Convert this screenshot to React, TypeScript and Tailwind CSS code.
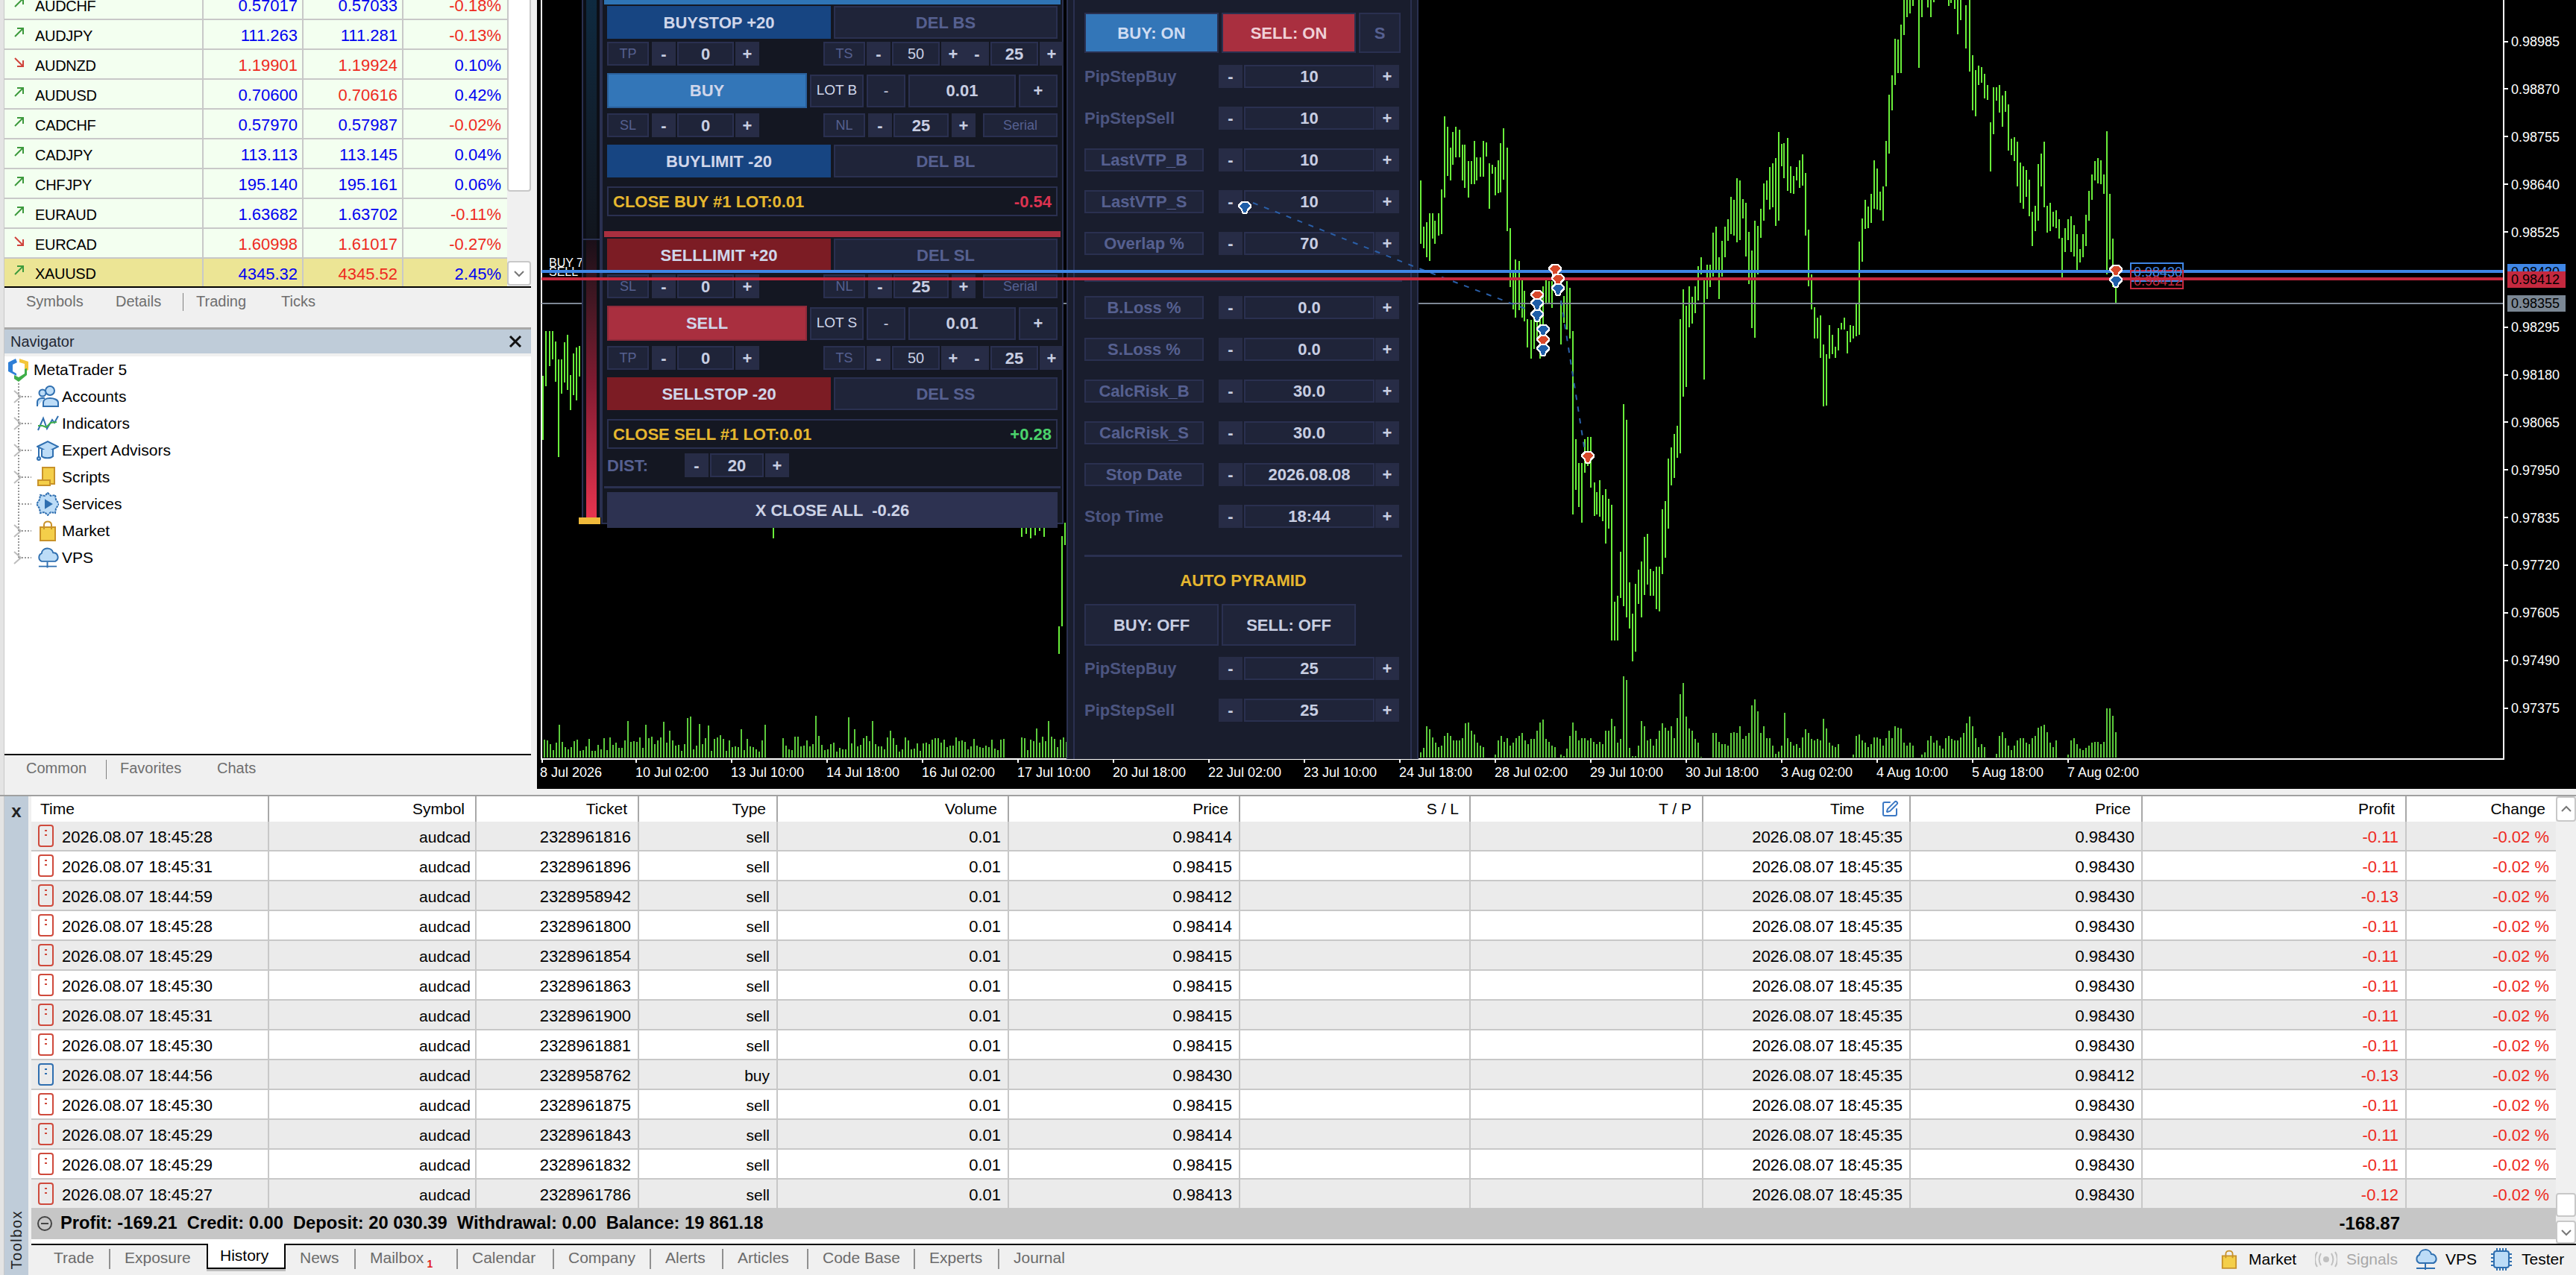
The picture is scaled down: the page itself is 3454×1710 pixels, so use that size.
import React from "react";
import { SquarePen } from "lucide-react";

type Bar = [number, number, number];
const z11: Bar[] = [[10,372,503],[18,467,512],[26,458,530],[35,440,538],[43,440,492],[50,455,503],[59,440,485],[68,390,483],[76,240,408],[84,262,362],[92,305,372],[100,272,340],[108,262,325],[117,268,325],[125,298,372],[133,298,388],[142,332,408],[150,332,380],[158,290,380],[166,325,372],[175,325,365],[183,290,365],[191,293,323],[200,336,430],[208,340,358],[216,345,402],[225,330,398],[232,295,397],[240,265,370],[250,304,476],[258,470,592],[266,560,638],[272,535,655],[282,538,640],[290,578,655],[298,600,662],[306,658,716],[316,660,740],[324,650,720],[332,640,700],[340,610,740],[349,590,680],[357,575,625],[365,580,625],[373,580,635],[381,560,590],[390,575,610],[398,620,710],[406,610,665],[415,580,680],[423,593,698],[431,683,1060],[439,905,1010],[447,955,1045],[456,955,1078],[464,905,975],[472,900,960],[480,900,1005],[490,995,1063],[497,1015,1060],[505,990,1065],[513,1020,1075],[522,1008,1120],[530,1028,1090],[538,1040,1320],[547,1240,1320],[555,1228,1320],[563,1138,1232],[571,833,1250],[579,865,1272],[588,1200,1296],[596,1265,1364],[604,1203,1343],[612,1175,1245],[621,1157,1272],[629,1107,1226],[637,1100,1205],[646,1172,1228],[654,1178,1228],[662,1168,1255],[670,1168,1260],[679,1050,1183],[687,1033,1150],[695,945,1090],[703,922,1000],[712,895,985],[720,877,943],[728,658,935],[736,597,818],[745,630,798],[753,590,675],[761,612,667],[770,590,645],[778,548,620],[786,530,565],[794,575,783],[803,545,617],[811,545,592],[819,480,570],[827,467,560],[836,530,617],[844,497,570],[852,467,530],[860,452,497],[868,405,482],[877,412,485],[885,367,500],[893,372,495],[901,410,450],[910,418,528],[918,478,585],[926,517,676],[935,455,697],[943,465,565],[951,430,490],[959,378,455],[968,372,412],[976,345,432],[984,337,428],[992,326,465],[1000,272,455],[1008,297,343],[1016,295,368],[1025,284,393],[1033,342,398],[1041,363,400],[1050,345,372],[1058,330,388],[1066,318,383],[1075,357,485],[1083,473,590],[1091,565,638],[1100,634,698],[1108,655,698],[1116,650,737],[1124,710,838],[1133,730,836],[1141,670,740],[1149,690,730],[1157,715,738],[1165,677,722],[1174,665,680],[1182,655,680],[1190,683,728],[1199,670,705],[1207,672,698],[1215,625,693],[1223,498,690],[1232,450,540],[1240,412,472],[1248,425,470],[1256,400,460],[1264,330,430],[1273,348,432],[1281,395,433],[1289,385,455],[1298,290,385],[1306,195,316],[1314,155,228],[1322,80,175],[1330,82,150],[1338,50,150],[1347,0,73],[1355,0,36],[1363,0,28],[1371,0,12],[1388,0,140],[1396,0,36],[1413,0,15],[1421,0,36],[1429,0,5],[1470,0,12],[1478,0,6],[1487,0,18],[1495,0,70],[1503,0,42],[1519,10,100],[1529,0,147]];
const z12: Bar[] = [[11,113,228],[19,145,240],[28,135,175],[37,138,170],[46,152,203],[54,175,206],[63,252,353],[72,180,276],[80,180,208],[89,175,232],[98,197,261],[107,188,230],[115,215,310],[124,286,320],[133,283,332],[141,292,384],[150,335,418],[159,342,430],[168,350,405],[176,370,446],[185,437,507],[194,424,477],[202,338,455],[211,317,385],[220,292,427],[228,424,480],[237,418,476],[246,437,467],[254,434,470],[263,452,492],[272,490,572],[281,470,520],[290,452,495],[298,446,520],[307,464,528],[316,483,556],[325,513,541],[333,483,531],[342,443,507],[351,394,455],[359,360,412],[368,332,372],[377,326,378],[386,330,380],[394,360,400],[403,271,565],[412,400,535],[420,492,592],[429,590,624]];
const z3: Bar[] = [[18,1098,1285],[27,967,1128],[36,967,1070],[45,967,1050],[54,997,1115],[63,1050,1336],[72,1050,1150],[80,1000,1118],[89,977,1140],[98,1095,1197],[107,1032,1155],[115,1015,1170],[124,1010,1100],[140,937,1040],[185,955,1018]];
const extra: Bar[] = [[1037,707,722],[1370,707,720],[1376,707,716],[1382,707,722],[1388,707,718],[1394,707,712],[1400,707,720],[1420,840,877],[1424,719,840],[1428,701,731]];
const pricePath = [
  ...z11.map(([x, t, b]) => `M${Math.round(1900 + x / 2.063)} ${Math.round(t / 1.537)}V${Math.round(b / 1.537)}`),
  ...z12.map(([x, t, b]) => `M${Math.round(2640 + x / 2.178)} ${Math.round(t / 1.537)}V${Math.round(b / 1.537)}`),
  ...z3.map(([x, t, b]) => `M${Math.round(720 + x / 2.178)} ${Math.round(t / 2.178)}V${Math.round(b / 2.178)}`),
  ...extra.map(([x, t, b]) => `M${x} ${t}V${b}`),
].join("");

const v11 = [10,20,65,58,42,30,22,25,45,50,45,35,35,35,40,70,73,55,48,30,25,22,0,0,0,6,35,45,32,40,25,30,40,45,50,35,28,38,38,55,72,78,38,32,25,22,0,6,3,18,45,73,55,35,40,40,35,40,32,28,32,28,55,55,80,65,30,38,168,160,20,3,3,25,75,65,35,38,25,38,55,70,62,55,65,40,82,130,153,85,60,55,38,30,2,0,0,0,50,50,32,28,28,25,50,52,50,65,38,45,50,108,120,95,50,65,40,40,25,8,12,25,92,40,32,25,28,20,42,58,50,38,35,38,35,80,60,30,25,22,28,0,0,0,0,6,45,48,35,30,22,28,42,42,38,25,40,55,40,65,62,60,30,25,30,25,0,0,6,10,35,45,30,35,25,18,40,45,38,35,35,42,50,70,85];
const v12 = [85,65,40,22,28,22,0,0,0,8,45,52,40,25,15,25,36,40,40,30,28,40,45,62,65,68,52,30,22,35,0,0,0,6,35,40,28,18,15,20,25,30,32,32,28,32,102,102,86,52];
let seed = 77;
const rnd = () => ((seed = (seed * 1103515245 + 12345) & 0x7fffffff) / 0x7fffffff);
const volLeft: string[] = [];
for (let x = 730; x < 1436; x += 4) {
  const week = (x - 730) % 320 > 296;
  if (week) continue;
  const r = rnd();
  const h = Math.round(8 + rnd() * 22 + (r > 0.9 ? 26 : 0));
  volLeft.push(`M${x} 1016V${1016 - h}`);
}
const volPath = [
  ...volLeft,
  ...v11.map((h, i) => (h ? `M${1905 + i * 4} 1016V${Math.round(1016 - h / 1.537)}` : "")),
  ...v12.map((h, i) => (h ? `M${2641 + i * 4} 1016V${Math.round(1016 - h / 1.537)}` : "")),
].join("");

const priceLabels: [string, number][] = [["0.98985",55.5],["0.98870",119.3],["0.98755",183.2],["0.98640",247],["0.98525",311],["0.98295",438.7],["0.98180",502.5],["0.98065",566.4],["0.97950",630.2],["0.97835",694],["0.97720",757.9],["0.97605",821.8],["0.97490",885.6],["0.97375",949.5]];
const timeLabels = ["10 Jul 02:00","13 Jul 10:00","14 Jul 18:00","16 Jul 02:00","17 Jul 10:00","20 Jul 18:00","22 Jul 02:00","23 Jul 10:00","24 Jul 18:00","28 Jul 02:00","29 Jul 10:00","30 Jul 18:00","3 Aug 02:00","4 Aug 10:00","5 Aug 18:00","7 Aug 02:00"];

function Marker({ x, y, c }: { x: number; y: number; c: string }) {
  return (
    <g transform={`translate(${x} ${y})`} shapeRendering="crispEdges">
      <polygon points="-9,-3 -5,-8 5,-8 9,-3 9,0 5,4 3,9 -3,9 -5,4 -9,0" fill="#fff" />
      <polygon points="-7,-2 -3,-6 3,-6 7,-2 3,3 2,7 -2,7 -3,3" fill={c} />
    </g>
  );
}

function Chart() {
  return (
    <svg className="absolute inset-0" width={2734} height={1058} viewBox="720 0 2734 1058">
      <g shapeRendering="crispEdges">
        <path d={volPath} stroke="#5ccb3c" strokeWidth={2} fill="none" />
        <path d={pricePath} stroke="#69ee3a" strokeWidth={2} fill="none" />
        <rect x={725} y={0} width={2} height={1018} fill="#fff" />
        <rect x={3356} y={0} width={2} height={1018} fill="#fff" />
        <rect x={725} y={1017} width={2633} height={2} fill="#fff" />
        <rect x={726} y={406} width={2630} height={2} fill="#7d8794" />
        {priceLabels.map(([l, y]) => <rect key={l} x={3358} y={y - 1} width={5} height={2} fill="#fff" />)}
        {[726, ...timeLabels.map((_, i) => 852 + i * 128)].map((x) => <rect key={x} x={x} y={1018} width={2} height={5} fill="#fff" />)}
      </g>
      <g fill="#fff" fontSize={18}>
        {priceLabels.map(([l, y]) => <text key={l} x={3367} y={y + 6.5}>{l}</text>)}
        <text x={724} y={1042}>8 Jul 2026</text>
        {timeLabels.map((t, i) => <text key={t} x={852 + i * 128} y={1042}>{t}</text>)}
        <text x={736} y={358} fontSize={16}>BUY 7</text>
        <text x={736} y={370} fontSize={16}>SELL</text>
      </g>
      <rect x={3362} y={354} width={78} height={22} fill="#3f86e6" shapeRendering="crispEdges" />
      <text x={3367} y={371} fontSize={18} fill="#000">0.98430</text>
      <rect x={3362} y={364} width={78} height={22} fill="#c5293f" shapeRendering="crispEdges" />
      <rect x={3362} y={396} width={78} height={22} fill="#7b8794" shapeRendering="crispEdges" />
      <g fontSize={18} fill="#000">
        <text x={3367} y={413}>0.98355</text>
        <text x={3367} y={381}>0.98412</text>
      </g>
    </svg>
  );
}

function Overlay() {
  return (
    <svg className="absolute inset-0 pointer-events-none" width={2734} height={1058} viewBox="720 0 2734 1058">
      <polyline points="1680,272 1900,359 2045,414" fill="none" stroke="#2a5fa8" strokeWidth={2} strokeDasharray="7 9" />
      <polyline points="2093,403 2125,605" fill="none" stroke="#2a5fa8" strokeWidth={2} strokeDasharray="7 9" />
      <rect x={726} y={362} width={2630} height={4} fill="#3f86e6" shapeRendering="crispEdges" />
      <rect x={726} y={372} width={2630} height={4} fill="#c5293f" shapeRendering="crispEdges" />
      <Marker x={1669} y={278} c="#1f5ea8" />
      <Marker x={2085} y={362} c="#d8482a" />
      <Marker x={2089} y={375} c="#d8482a" />
      <Marker x={2089} y={388} c="#1f5ea8" />
      <Marker x={2061} y={397} c="#d8482a" />
      <Marker x={2061} y={408} c="#1f5ea8" />
      <Marker x={2061} y={423} c="#1f5ea8" />
      <Marker x={2069} y={443} c="#1f5ea8" />
      <Marker x={2069} y={457} c="#d8482a" />
      <Marker x={2069} y={469} c="#1f5ea8" />
      <Marker x={2129} y={613} c="#d8482a" />
      <Marker x={2837} y={363} c="#d8482a" />
      <Marker x={2837} y={377} c="#1f5ea8" />
      <g fill="none" strokeWidth={2} shapeRendering="crispEdges">
        <rect x={2857} y={353} width={70} height={24} stroke="#3f86e6" />
        <rect x={2857} y={363} width={70} height={24} stroke="#c5293f" />
      </g>
      <text x={2861} y={371} fontSize={18} fill="#3f86e6">0.98430</text>
      <text x={2861} y={383} fontSize={18} fill="#c5293f">0.98412</text>
    </svg>
  );
}

const cell = "flex items-center justify-center shrink-0 h-full";
const boxed = "bg-[#1f2439] border-2 border-[#2a3050]";
const Lbl = ({ c, t }: { c: string; t: string }) => <div className={`${cell} ${boxed} text-[18px] text-[#566090] ${c}`}>{t}</div>;
const Btn = ({ c, t }: { c: string; t: string }) => <div className={`${cell} bg-[#272c46] text-[22px] font-bold text-[#c8cee2] ${c}`}>{t}</div>;
const Val = ({ c, t }: { c: string; t: string }) => <div className={`${cell} ${boxed} text-[22px] font-bold text-[#c8cee2] ${c}`}>{t}</div>;

function TpRow({ mt, a, b }: { mt: string; a: string; b: string }) {
  return (
    <div className={`flex h-[32px] ${mt}`}>
      <Lbl c="w-[56px]" t={a} />
      <Btn c="w-[32px] ml-[4px]" t="-" />
      <Val c="w-[76px] ml-[2px]" t="0" />
      <Btn c="w-[32px] ml-[2px]" t="+" />
      <Lbl c="w-[56px] ml-[86px]" t={b} />
      <Btn c="w-[32px] ml-[2px]" t="-" />
      <div className={`${cell} ${boxed} w-[64px] ml-[2px] text-[20px] text-[#c8cee2]`}>50</div>
      <Btn c="w-[32px] ml-[2px]" t="+" />
      <Btn c="w-[32px]" t="-" />
      <Val c="w-[64px] ml-[2px]" t="25" />
      <Btn c="w-[32px] ml-[2px]" t="+" />
    </div>
  );
}
function SlRow({ mt, a, b }: { mt: string; a: string; b: string }) {
  return (
    <div className={`flex h-[32px] ${mt}`}>
      <Lbl c="w-[56px]" t={a} />
      <Btn c="w-[32px] ml-[4px]" t="-" />
      <Val c="w-[76px] ml-[2px]" t="0" />
      <Btn c="w-[32px] ml-[2px]" t="+" />
      <Lbl c="w-[56px] ml-[86px]" t={b} />
      <Btn c="w-[32px] ml-[4px]" t="-" />
      <Val c="w-[74px] ml-[2px]" t="25" />
      <Btn c="w-[32px] ml-[4px]" t="+" />
      <Lbl c="w-[100px] ml-[10px]" t="Serial" />
    </div>
  );
}
function OrderRow({ mt, t, d, bg }: { mt: string; t: string; d: string; bg: string }) {
  return (
    <div className={`flex h-[44px] gap-[4px] ${mt}`}>
      <div className={`${cell} w-[300px] ${bg} text-[22px] font-bold text-[#d0d6ea]`}>{t}</div>
      <div className={`${cell} ${boxed} w-[300px] text-[22px] font-bold text-[#566090]`}>{d}</div>
    </div>
  );
}
function MarketRow({ mt, t, lot, bg }: { mt: string; t: string; lot: string; bg: string }) {
  return (
    <div className={`flex h-[47px] items-center gap-[4px] ${mt}`}>
      <div className={`${cell} w-[268px] ${bg} text-[22px] font-bold text-[#d0d6ea]`}>{t}</div>
      <div className={`${cell} ${boxed} w-[72px] !h-[44px] text-[19px] text-[#d0d6ea]`}>{lot}</div>
      <div className={`${cell} ${boxed} w-[52px] !h-[44px] text-[20px] text-[#c8cee2]`}>-</div>
      <div className={`${cell} ${boxed} w-[144px] !h-[44px] text-[22px] font-bold text-[#c8cee2]`}>0.01</div>
      <div className={`${cell} ${boxed} w-[52px] !h-[44px] text-[22px] font-bold text-[#c8cee2]`}>+</div>
    </div>
  );
}
function CloseRow({ mt, t, v, c }: { mt: string; t: string; v: string; c: string }) {
  return (
    <div className={`flex h-[40px] w-[604px] items-center justify-between ${boxed} !bg-[#141722] px-[6px] text-[22px] font-bold ${mt}`}>
      <span className="text-[#e6b72f]">{t}</span>
      <span className={c}>{v}</span>
    </div>
  );
}

function LeftPanel() {
  return (
    <div className="absolute left-[86px] top-0 w-[620px] h-[703px] bg-[#141722] border-2 border-t-0 border-[#2a3050] px-[2px]">
      <div className="h-[6px] bg-[#2f74b5]" />
      <div className="pl-[4px]">
        <OrderRow mt="mt-[2px]" t="BUYSTOP +20" d="DEL BS" bg="bg-[#174582]" />
        <TpRow mt="mt-[4px]" a="TP" b="TS" />
        <MarketRow mt="mt-[10px]" t="BUY" lot="LOT B" bg="bg-[#3376b8] border-2 border-[#2a5f9a]" />
        <SlRow mt="mt-[7px]" a="SL" b="NL" />
        <OrderRow mt="mt-[10px]" t="BUYLIMIT -20" d="DEL BL" bg="bg-[#174582]" />
        <CloseRow mt="mt-[12px]" t="CLOSE BUY #1 LOT:0.01" v="-0.54" c="text-[#dc3350]" />
      </div>
      <div className="h-[8px] mt-[20px] bg-[#a92f3f]" />
      <div className="pl-[4px]">
        <OrderRow mt="mt-[2px]" t="SELLLIMIT +20" d="DEL SL" bg="bg-[#7c1c24]" />
        <SlRow mt="mt-[4px]" a="SL" b="NL" />
        <MarketRow mt="mt-[10px]" t="SELL" lot="LOT S" bg="bg-[#a92f3f] border-2 border-[#8e2a3a]" />
        <TpRow mt="mt-[7px]" a="TP" b="TS" />
        <OrderRow mt="mt-[10px]" t="SELLSTOP -20" d="DEL SS" bg="bg-[#7c1c24]" />
        <CloseRow mt="mt-[12px]" t="CLOSE SELL #1 LOT:0.01" v="+0.28" c="text-[#4bd36c]" />
        <div className="flex h-[32px] mt-[6px] items-center">
          <div className="w-[104px] text-[22px] font-bold text-[#566090]">DIST:</div>
          <Btn c="w-[32px]" t="-" />
          <Val c="w-[72px] ml-[2px]" t="20" />
          <Btn c="w-[32px] ml-[2px]" t="+" />
        </div>
      </div>
      <div className="h-[3px] mt-[12px] bg-[#2a3050]" />
      <div className="pl-[4px]">
        <div className={`${cell} !h-[48px] w-[604px] mt-[5px] bg-[#2d3251] text-[22px] font-bold text-[#cdd3e6] whitespace-pre`}>X CLOSE ALL  -0.26</div>
      </div>
    </div>
  );
}

function Slider() {
  return (
    <div className="absolute left-[60px] top-0 w-[26px] h-[703px] flex flex-col">
      <div className="h-[322px] border-x-2 border-b-2 border-[#2a3050] px-[4px] bg-[#0c0f16]">
        <div className="h-full bg-linear-to-b from-[#0e2a40] to-[#11151d]" />
      </div>
      <div className="h-[372px] border-x-2 border-[#2a3050] px-[4px] bg-[#0c0f16]">
        <div className="h-full bg-linear-to-b from-[#1a0f18] via-[#7d1a30] to-[#e8344f]" />
      </div>
      <div className="h-[9px] w-[29px] -ml-[4px] bg-[#f0b93a]" />
    </div>
  );
}

const pLbl = "w-[160px] h-full flex items-center justify-center text-[22px] font-bold text-[#566090]";
function RightRow({ label, boxedLabel, value, mb }: { label: string; boxedLabel?: boolean; value: string; mb?: string }) {
  return (
    <div className={`flex h-[31px] ${mb ?? "mb-[25px]"}`}>
      {boxedLabel ? (
        <div className={`${pLbl} ${boxed}`}>{label}</div>
      ) : (
        <div className="w-[160px] h-full flex items-center text-[22px] font-bold text-[#4c5580]">{label}</div>
      )}
      <Btn c="w-[32px] ml-[20px]" t="-" />
      <div className={`${cell} ${boxed} w-[175px] ml-[2px] text-[22px] font-bold text-[#c8cee2]`}>{value}</div>
      <Btn c="w-[32px] ml-[1px]" t="+" />
    </div>
  );
}

function RightPanel() {
  return (
    <div className="absolute left-[710px] top-0 w-[472px] h-[1018px] bg-[#191d2d] border-x-2 border-[#2a3050] px-[7px]">
      <div className="h-full border-x-2 border-[#2a3050] pl-[13px] pt-[17px]">
        <div className="flex h-[54px] gap-[4px] mb-[16px]">
          <div className={`${cell} w-[180px] bg-[#3376b8] border-2 border-[#2a3050] text-[22px] font-bold text-[#cfdcf2]`}>BUY: ON</div>
          <div className={`${cell} w-[180px] bg-[#a92f3f] border-2 border-[#2a3050] text-[22px] font-bold text-[#f0d0d6]`}>SELL: ON</div>
          <div className={`${cell} ${boxed} w-[56px] text-[22px] font-bold text-[#566090]`}>S</div>
        </div>
        <RightRow label="PipStepBuy" value="10" />
        <RightRow label="PipStepSell" value="10" />
        <RightRow label="LastVTP_B" boxedLabel value="10" />
        <RightRow label="LastVTP_S" boxedLabel value="10" />
        <RightRow label="Overlap %" boxedLabel value="70" mb="mb-[33px]" />
        <div className="h-[3px] w-[426px] bg-[#2a3050] mb-[19px]" />
        <RightRow label="B.Loss %" boxedLabel value="0.0" />
        <RightRow label="S.Loss %" boxedLabel value="0.0" />
        <RightRow label="CalcRisk_B" boxedLabel value="30.0" />
        <RightRow label="CalcRisk_S" boxedLabel value="30.0" />
        <RightRow label="Stop Date" boxedLabel value="2026.08.08" />
        <RightRow label="Stop Time" value="18:44" mb="mb-[36px]" />
        <div className="h-[3px] w-[426px] bg-[#2a3050]" />
        <div className="h-[63px] w-[426px] flex items-center justify-center text-[22px] font-bold text-[#e6b72f]">AUTO PYRAMID</div>
        <div className="flex h-[56px] gap-[4px] mb-[15px]">
          <div className={`${cell} ${boxed} w-[180px] text-[22px] font-bold text-[#c8cee2]`}>BUY: OFF</div>
          <div className={`${cell} ${boxed} w-[180px] text-[22px] font-bold text-[#c8cee2]`}>SELL: OFF</div>
        </div>
        <RightRow label="PipStepBuy" value="25" />
        <RightRow label="PipStepSell" value="25" />
      </div>
    </div>
  );
}

const Up = () => (
  <svg width="16" height="15" viewBox="0 0 16 15" fill="none" stroke="#3d9a3d" strokeWidth="2"><path d="M2 13 13 2M5 2h8v8" /></svg>
);
const Down = () => (
  <svg width="16" height="15" viewBox="0 0 16 15" fill="none" stroke="#d0443c" strokeWidth="2"><path d="M2 2 13 13M13 5v8H5" /></svg>
);
const BL = "text-[#0000f0]";
const RD = "text-[#ee2a1e]";
const market: [string, boolean, string, string, string, string, string, string][] = [
  ["AUDCHF", true, "0.57017", BL, "0.57033", BL, "-0.18%", RD],
  ["AUDJPY", true, "111.263", BL, "111.281", BL, "-0.13%", RD],
  ["AUDNZD", false, "1.19901", RD, "1.19924", RD, "0.10%", BL],
  ["AUDUSD", true, "0.70600", BL, "0.70616", RD, "0.42%", BL],
  ["CADCHF", true, "0.57970", BL, "0.57987", BL, "-0.02%", RD],
  ["CADJPY", true, "113.113", BL, "113.145", BL, "0.04%", BL],
  ["CHFJPY", true, "195.140", BL, "195.161", BL, "0.06%", BL],
  ["EURAUD", true, "1.63682", BL, "1.63702", BL, "-0.11%", RD],
  ["EURCAD", false, "1.60998", RD, "1.61017", RD, "-0.27%", RD],
  ["XAUUSD", true, "4345.32", BL, "4345.52", RD, "2.45%", BL],
];

function MarketWatch() {
  return (
    <div className="flex h-[384px] overflow-hidden">
      <div className="w-[674px] -mt-[13px]">
        {market.map((r, i) => {
          const last = i === market.length - 1;
          return (
            <div key={r[0]} className={`grid grid-cols-[267px_134px_134px_139px] ${last ? "h-[37px] bg-[#ece595]" : "h-[40px] bg-[#f3fff0] border-b-2 border-[#c8c8c8]"}`}>
              <div className="flex items-center pl-[12px] border-r-2 border-[#c8c8c8]">
                <span className="w-[29px] -mt-[6px]">{r[1] ? <Up /> : <Down />}</span>
                <span className="text-[20px] text-black tracking-[-0.3px] pt-[3px]">{r[0]}</span>
              </div>
              <div className={`flex items-center justify-end pr-[6px] pt-[3px] border-r-2 border-[#c8c8c8] text-[22px] ${r[3]}`}>{r[2]}</div>
              <div className={`flex items-center justify-end pr-[6px] pt-[3px] border-r-2 border-[#c8c8c8] text-[22px] ${r[5]}`}>{r[4]}</div>
              <div className={`flex items-center justify-end pr-[8px] pt-[3px] text-[22px] ${r[7]}`}>{r[6]}</div>
            </div>
          );
        })}
      </div>
      <div className="w-[32px] flex flex-col">
        <div className="h-[257px] bg-white border-2 border-t-0 border-[#c8c8c8] rounded-b-[4px]" />
        <div className="h-[93px]" />
        <div className="h-[33px] bg-white border-2 border-[#c8c8c8] rounded-[4px] flex items-center justify-center">
          <svg width="14" height="10" viewBox="0 0 14 10" fill="none" stroke="#777" strokeWidth="2"><path d="m1 2 6 6 6-6" /></svg>
        </div>
      </div>
    </div>
  );
}

const ico = { stroke: "#2f6fb0", fill: "#bcdcf7", strokeWidth: 2 };
const IconMT = () => (
  <svg width="30" height="32" viewBox="0 0 30 32">
    <path d="M1 6 11 1l2 5-6 3v9l5 3v3L1 18z" fill="#2f7fd6" />
    <path d="m16 1 12 4v11l-5 3V8l-7-2z" fill="#f4c63a" />
    <path d="M9 23l6 3 8-5v-6l3-1v9l-11 9-6-4z" fill="#3fae49" />
  </svg>
);
const IconAcc = () => (
  <svg width="30" height="30" viewBox="0 0 30 30" {...ico}>
    <circle cx="18" cy="7" r="6" /><circle cx="8" cy="10" r="4.5" />
    <path d="M1 28v-6c0-3 3-5 6-5h4M9 28v-5c0-4 4-6 9-6s11 2 11 6v5z" />
  </svg>
);
const IconInd = () => (
  <svg width="30" height="30" viewBox="0 0 30 30" fill="none" strokeWidth="2">
    <path d="M2 24 9 8l5 14 7-12 3 4 5-9" stroke="#2f6fb0" />
    <path d="M2 18h6l5 2 6-6 8-1" stroke="#3fae49" />
  </svg>
);
const IconEA = () => (
  <svg width="30" height="30" viewBox="0 0 30 30" {...ico}>
    <path d="M1 10 15 3l14 7-14 7z" /><path d="M7 14v9c3 3 12 3 15 0v-9" /><path d="M3 11v13" /><circle cx="3" cy="26" r="2" />
  </svg>
);
const IconScr = () => (
  <svg width="30" height="30" viewBox="0 0 30 30" stroke="#c8922a" strokeWidth="2" fill="#f4cf4a">
    <path d="M8 2h16v22H8z" /><path d="M2 19h16v7H2z" />
  </svg>
);
const IconSvc = () => (
  <svg width="30" height="32" viewBox="0 0 30 32" {...ico}>
    <path d="m15 1 4 4 6-1 1 6 4 6-4 6-1 6-6-1-4 4-4-4-6 1-1-6-4-6 4-6 1-6 6 1z" strokeDasharray="3 1" />
    <path d="m12 11 8 5-8 5z" fill="#2f6fb0" />
  </svg>
);
const IconBag = ({ w = 24, h = 28 }: { w?: number; h?: number }) => (
  <svg width={w} height={h} viewBox="0 0 24 28" stroke="#c8922a" strokeWidth="2" fill="#f4cf4a">
    <path d="M2 9h20v18H2z" /><path d="M7 12V6c0-6 10-6 10 0v6" fill="none" />
  </svg>
);
const IconVps = () => (
  <svg width="31" height="31" viewBox="0 0 31 31" {...ico}>
    <path d="M7 20a6 6 0 0 1 0-11c1-9 14-9 16-1 7 0 9 9 3 12z" /><path d="M15 21v8M3 27h25" fill="none" />
  </svg>
);
const IconChip = () => (
  <svg width="28" height="32" viewBox="0 0 28 32" stroke="#2f6fb0" strokeWidth="2" fill="#bcdcf7">
    <rect x="4" y="5" width="20" height="22" rx="3" />
    <path d="M8 1v4M12 1v4M16 1v4M20 1v4M8 27v4M12 27v4M16 27v4M20 27v4M0 9h4M0 14h4M0 19h4M0 24h4M24 9h4M24 14h4M24 19h4M24 24h4" />
  </svg>
);

function TreeLine({ chev = true, last = false }: { chev?: boolean; last?: boolean }) {
  return (
    <svg width="43" height="36" viewBox="0 0 43 36" className="shrink-0" fill="none">
      <path d={last ? "M19 0V18" : "M19 0V36"} stroke="#777" strokeWidth="1.5" strokeDasharray="2 2" />
      <path d="M19 18H36" stroke="#777" strokeWidth="1.5" strokeDasharray="2 2" />
      {chev && <path d="m13 10 9 8-9 8" stroke="#bdbdbd" strokeWidth="2" />}
    </svg>
  );
}
const tree: [string, React.ReactNode, boolean, boolean][] = [
  ["Accounts", <IconAcc />, true, false],
  ["Indicators", <IconInd />, true, false],
  ["Expert Advisors", <IconEA />, true, false],
  ["Scripts", <IconScr />, true, false],
  ["Services", <IconSvc />, false, false],
  ["Market", <IconBag />, true, false],
  ["VPS", <IconVps />, true, true],
];

function Navigator() {
  return (
    <div className="flex flex-col h-[569px]">
      <div className="h-[32px] bg-[#bfccd9] flex items-center justify-between pl-[8px] pr-[12px] text-[20px] text-[#1f2733]">
        <span>Navigator</span>
        <svg width="18" height="18" viewBox="0 0 18 18" stroke="#111" strokeWidth="3"><path d="m2 2 14 14M16 2 2 16" /></svg>
      </div>
      <div className="h-[4px]" />
      <div className="h-[533px] bg-white text-[21px] text-black">
        <div className="flex h-[36px] items-center pl-[4px]">
          <IconMT />
          <span className="ml-[5px]">MetaTrader 5</span>
        </div>
        {tree.map(([t, ic, chev, last]) => (
          <div key={t} className="flex h-[36px] items-center">
            <TreeLine chev={chev} last={last} />
            <span className="w-[30px] flex justify-center shrink-0">{ic}</span>
            <span className="ml-[4px]">{t}</span>
          </div>
        ))}
      </div>
    </div>
  );
}

const cols = "grid grid-cols-[319px_278px_218px_186px_310px_310px_309px_312px_278px_311px_354px_200px]";
const heads = ["Symbol", "Ticket", "Type", "Volume", "Price", "S / L", "T / P"];
const trades: [string, string, string, string, string, string, string][] = [
  ["18:45:28","2328961816","sell","0.98414","","0.98430","-0.11"],
  ["18:45:31","2328961896","sell","0.98415","","0.98430","-0.11"],
  ["18:44:59","2328958942","sell","0.98412","","0.98430","-0.13"],
  ["18:45:28","2328961800","sell","0.98414","","0.98430","-0.11"],
  ["18:45:29","2328961854","sell","0.98415","","0.98430","-0.11"],
  ["18:45:30","2328961863","sell","0.98415","","0.98430","-0.11"],
  ["18:45:31","2328961900","sell","0.98415","","0.98430","-0.11"],
  ["18:45:30","2328961881","sell","0.98415","","0.98430","-0.11"],
  ["18:44:56","2328958762","buy","0.98430","","0.98412","-0.13"],
  ["18:45:30","2328961875","sell","0.98415","","0.98430","-0.11"],
  ["18:45:29","2328961843","sell","0.98414","","0.98430","-0.11"],
  ["18:45:29","2328961832","sell","0.98415","","0.98430","-0.11"],
  ["18:45:27","2328961786","sell","0.98413","","0.98430","-0.12"],
];
const hc = "flex items-center justify-end pr-[14px] border-r-2 border-[#a8a8a8]";
const tc = "flex items-center justify-end pr-[9px] pt-[3px] border-r-2 border-[#c8c8c8]";

function DealIcon({ buy }: { buy: boolean }) {
  const c = buy ? "#2f6fb0" : "#cf4a3c";
  return (
    <svg width="21" height="30" viewBox="0 0 21 30" fill="none" className="shrink-0 -mt-[3px]">
      <rect x="1" y="1" width="19" height="28" rx="3" stroke={c} strokeWidth="2" />
      <path d="M9 8h3M9 14h3" stroke={c} strokeWidth="2" />
    </svg>
  );
}

function TradeTable() {
  return (
    <div className="w-[3385px] flex flex-col text-[21px] text-black">
      <div className={`${cols} h-[34px] bg-white`}>
        <div className="flex items-center pl-[12px] border-r-2 border-[#a8a8a8]">Time</div>
        {heads.map((h) => <div key={h} className={hc}>{h}</div>)}
        <div className="flex items-center justify-end pr-[14px] gap-[22px] border-r-2 border-[#a8a8a8]">
          <span>Time</span>
          <SquarePen size={24} color="#3b78c4" />
        </div>
        <div className={hc}>Price</div>
        <div className={hc}>Profit</div>
        <div className="flex items-center justify-end pr-[14px]">Change</div>
      </div>
      {trades.map((t, i) => (
        <div key={t[1]} className={`${cols} ${i === 12 ? "h-[38px]" : "h-[40px] border-b-2 border-[#c8c8c8]"} ${i % 2 === 0 ? "bg-[#ebebeb]" : "bg-white"}`}>
          <div className="flex items-center pl-[9px] pt-[3px] border-r-2 border-[#c8c8c8] text-[22px]">
            <DealIcon buy={t[2] === "buy"} />
            <span className="ml-[11px]">2026.08.07 {t[0]}</span>
          </div>
          <div className={`${tc} !pr-[6px]`}>audcad</div>
          <div className={`${tc} text-[22px]`}>{t[1]}</div>
          <div className={tc}>{t[2]}</div>
          <div className={`${tc} text-[22px]`}>0.01</div>
          <div className={`${tc} text-[22px]`}>{t[3]}</div>
          <div className={tc} />
          <div className={tc} />
          <div className={`${tc} text-[22px]`}>2026.08.07 18:45:35</div>
          <div className={`${tc} text-[22px]`}>{t[5]}</div>
          <div className={`${tc} text-[22px] text-[#ee2a1e]`}>{t[6]}</div>
          <div className="flex items-center justify-end pr-[9px] pt-[3px] text-[22px] text-[#ee2a1e]">-0.02 %</div>
        </div>
      ))}
      <div className={`${cols} h-[42px] bg-[#c6c6c6] font-bold`}>
        <div className="col-span-10 flex items-center pl-[6px] whitespace-pre text-[23.7px]">
          <svg width="24" height="24" viewBox="0 0 24 24" fill="none" stroke="#444" strokeWidth="2" className="shrink-0"><circle cx="12" cy="12" r="9" /><path d="M7 12h10" /></svg>
          <span className="ml-[9px]">Profit: -169.21  Credit: 0.00  Deposit: 20 030.39  Withdrawal: 0.00  Balance: 19 861.18</span>
        </div>
        <div className="flex items-center justify-end pr-[9px] text-[24px]">-168.87</div>
        <div />
      </div>
      <div className="h-[6px] bg-white" />
    </div>
  );
}

const tabs: [string, string][] = [
  ["Trade", "w-[95px] border-r-2 ml-[11px]"],
  ["Exposure", "w-[129px]"],
];
const tabs2: [string, string][] = [
  ["News", "w-[94px] border-r-2"],
  ["Mailbox", "w-[137px] border-r-2"],
  ["Calendar", "w-[129px] border-r-2"],
  ["Company", "w-[130px] border-r-2"],
  ["Alerts", "w-[97px] border-r-2"],
  ["Articles", "w-[114px] border-r-2"],
  ["Code Base", "w-[143px] border-r-2"],
  ["Experts", "w-[113px] border-r-2"],
  ["Journal", "w-[100px]"],
];
const Tab = ({ t, c }: { t: string; c: string }) => (
  <div className={`h-[27px] mt-[5px] pl-[19px] pb-[4px] flex items-center border-[#909090] text-[#6b6b6b] ${c}`}>
    {t}
    {t === "Mailbox" && <span className="ml-[4px] mt-[18px] text-[14px] font-bold text-[#e02020]">1</span>}
  </div>
);

function BottomTabs() {
  return (
    <div className="h-[40px] flex text-[21px]">
      {tabs.map(([t, c]) => <Tab key={t} t={t} c={c} />)}
      <div className="w-[106px] h-[34px] -mt-[2px] bg-white border-x-2 border-b-2 border-black shadow-[0_3px_0_#bdbdbd] pl-[16px] flex items-center text-black">History</div>
      {tabs2.map(([t, c]) => <Tab key={t} t={t} c={c} />)}
      <div className="ml-auto flex items-center text-black pb-[2px]">
        <div className="w-[126px] flex items-center"><IconBag w={22} h={26} /><span className="ml-[15px]">Market</span></div>
        <div className="w-[133px] flex items-center text-[#a8a8a8]">
          <svg width="30" height="22" viewBox="0 0 30 22" fill="none" stroke="#c0c0c0" strokeWidth="2"><circle cx="15" cy="11" r="3" fill="#c0c0c0" /><path d="M8 3c-3 5-3 11 0 16M22 3c3 5 3 11 0 16M3 1c-4 6-4 14 0 20M27 1c4 6 4 14 0 20" /></svg>
          <span className="ml-[12px]">Signals</span>
        </div>
        <div className="w-[103px] flex items-center"><IconVps /><span className="ml-[11px]">VPS</span></div>
        <div className="w-[114px] flex items-center"><IconChip /><span className="ml-[13px]">Tester</span></div>
      </div>
    </div>
  );
}

const Chev = ({ up }: { up: boolean }) => (
  <svg width="14" height="10" viewBox="0 0 14 10" fill="none" stroke="#777" strokeWidth="2"><path d={up ? "m1 8 6-6 6 6" : "m1 2 6 6 6-6"} /></svg>
);

export default function App() {
  return (
    <div className="w-[3454px] h-[1710px] overflow-hidden flex flex-col bg-[#f0f0f0] [font-family:'Liberation_Sans',Arial,sans-serif]">
      <div className="flex h-[1066px]">
        <div className="w-[6px] h-full bg-[#e4e4e4] border-r border-[#c8c8c8]" />
        <div className="w-[706px] flex flex-col">
          <MarketWatch />
          <div className="h-[2px] bg-black" />
          <div className="h-[53px] flex pt-[3px] text-[20px] text-[#6e6e6e]">
            <div className="w-[149px] pl-[29px]">Symbols</div>
            <div className="w-[90px]">Details</div>
            <div className="w-[1px] h-[24px] mt-[4px] bg-[#808080]" />
            <div className="w-[131px] pl-[17px]">Trading</div>
            <div>Ticks</div>
          </div>
          <div className="h-[3px] bg-[#a8a8a8]" />
          <Navigator />
          <div className="h-[2px] bg-black" />
          <div className="flex-1 flex pt-[2px] text-[20px] text-[#6e6e6e]">
            <div className="w-[136px] pl-[29px]">Common</div>
            <div className="w-[1px] h-[26px] mt-[4px] bg-[#808080]" />
            <div className="w-[148px] pl-[18px]">Favorites</div>
            <div>Chats</div>
          </div>
        </div>
        <div className="w-[8px]" />
        <div className="w-[2734px] h-[1058px] relative bg-black overflow-hidden">
          <Chart />
          <Slider />
          <LeftPanel />
          <RightPanel />
          <Overlay />
        </div>
      </div>
      <div className="h-[2px] bg-[#a0a0a0]" />
      <div className="flex h-[642px]">
        <div className="w-[6px] bg-[#e4e4e4] border-r border-[#c8c8c8]" />
        <div className="w-[32px] bg-[#bfccd9] flex flex-col items-center justify-between pb-[8px]">
          <div className="text-[24px] font-bold text-[#222] leading-[40px]">x</div>
          <div className="[writing-mode:vertical-rl] rotate-180 text-[20px] tracking-[1.5px] text-[#222]">Toolbox</div>
        </div>
        <div className="w-[4px]" />
        <div className="w-[3412px] flex flex-col">
          <div className="flex h-[600px]">
            <TradeTable />
            <div className="w-[27px] flex flex-col">
              <div className="h-[34px] bg-white border-2 border-[#c8c8c8] rounded-[4px] flex items-center justify-center"><Chev up /></div>
              <div className="h-[498px]" />
              <div className="h-[32px] bg-white border-2 border-[#c8c8c8] rounded-[4px]" />
              <div className="h-[5px]" />
              <div className="h-[31px] bg-white border-2 border-[#c8c8c8] rounded-[4px] flex items-center justify-center"><Chev up={false} /></div>
            </div>
          </div>
          <div className="h-[2px] bg-black" />
          <BottomTabs />
        </div>
      </div>
    </div>
  );
}
